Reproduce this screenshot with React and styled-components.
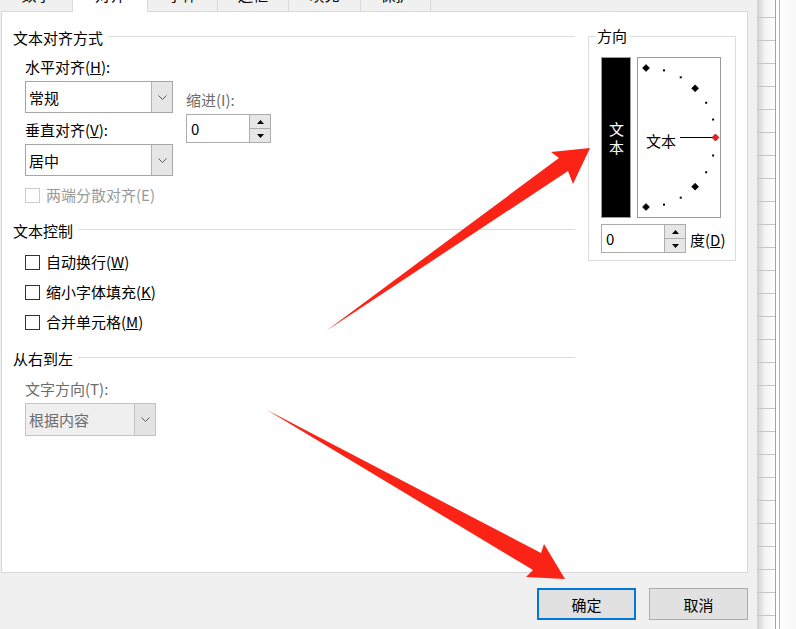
import React from "react"
import styled, { createGlobalStyle } from "styled-components"

const GlobalStyle = createGlobalStyle`
  html, body {
    margin: 0;
    padding: 0;
    background: #fff;
    overflow: hidden;
  }
  body {
    font-family: "Noto Sans CJK SC", "Noto Sans", sans-serif;
    font-size: 15px;
    color: #000;
  }
`

const TABS = [
  { label: "数字", w: 72 },
  { label: "对齐", w: 75, active: true },
  { label: "字体", w: 70 },
  { label: "边框", w: 71 },
  { label: "填充", w: 72 },
  { label: "保护", w: 70 },
]

const Chevron = () => (
  <svg width="9" height="5" viewBox="0 0 9 5">
    <polyline points="0.5,0.5 4.5,4.5 8.5,0.5" fill="none" stroke="#5a5a5a" strokeWidth="1" />
  </svg>
)

const Triangle = ({ up }) => (
  <svg width="7" height="4" viewBox="0 0 7 4">
    <polygon points={up ? "0,4 3.5,0 7,4" : "0,0 3.5,4 7,0"} fill="#000" />
  </svg>
)

const Select = ({ value, width, height, disabled }) => (
  <SelectBox $w={width} $h={height} $disabled={disabled}>
    <SelectValue>{value}</SelectValue>
    <SelectArrow $disabled={disabled}>
      <Chevron />
    </SelectArrow>
  </SelectBox>
)

const Spin = ({ value }) => (
  <SpinBox>
    <SpinValue>{value}</SpinValue>
    <SpinButtons>
      <SpinBtn>
        <Triangle up />
      </SpinBtn>
      <SpinBtn>
        <Triangle />
      </SpinBtn>
    </SpinButtons>
  </SpinBox>
)

const CheckItem = ({ children, disabled, mt }) => (
  <CheckRow $disabled={disabled} $mt={mt}>
    <Check $disabled={disabled} />
    <span>{children}</span>
  </CheckRow>
)

// orientation dial: half circle of marks, centre at the left edge
const Dial = () => {
  const cx = 8
  const cy = 79.5
  const r = 69.5
  const marks = []
  for (let a = -90; a <= 90; a += 15) {
    const rad = (a * Math.PI) / 180
    const x = cx + r * Math.cos(rad)
    const y = cy - r * Math.sin(rad)
    if (a % 45 === 0) {
      const d = 3.5
      marks.push(
        <polygon
          key={a}
          points={`${x},${y - d} ${x + d},${y} ${x},${y + d} ${x - d},${y}`}
          fill={a === 0 ? "#ff1a1a" : "#000"}
          stroke={a === 0 ? "#7a0000" : "#000"}
          strokeWidth="0.6"
        />
      )
    } else {
      marks.push(<rect key={a} x={x - 1} y={y - 1} width="2" height="2" fill="#000" />)
    }
  }
  return (
    <DialBox>
      <svg width="82" height="159" viewBox="0 0 82 159">
        <line x1="42" y1="79.5" x2="75" y2="79.5" stroke="#000" strokeWidth="1" />
        {marks}
      </svg>
      <DialLabel>文本</DialLabel>
    </DialBox>
  )
}

const Arrows = () => (
  <Overlay viewBox="0 0 796 629" width="796" height="629">
    <polygon
      points="326,331 559,158 551,152 590,148 573,184 568,171"
      fill="#fb2216"
    />
    <polygon
      points="267,410 541,553 544,544 565,579 526,577 533,570"
      fill="#fb2216"
    />
  </Overlay>
)

export default function App() {
  return (
    <Screen>
      <GlobalStyle />
      <Dialog>
        <TabBar>
          {TABS.map(t => (
            <Tab key={t.label} $w={t.w} $active={t.active}>
              <span>{t.label}</span>
            </Tab>
          ))}
          <TabFill />
        </TabBar>

        <Panel>
          <LeftCol>
            <SectionHeader>文本对齐方式</SectionHeader>
            <Indent>
              <AlignRow>
                <Column>
                  <Label $mt={9}>
                    水平对齐(<u>H</u>):
                  </Label>
                  <Select value="常规" width={148} />
                  <Label $mt={7}>
                    垂直对齐(<u>V</u>):
                  </Label>
                  <Select value="居中" width={148} />
                </Column>
                <IndentCol>
                  <Label $mt={42} $muted>
                    缩进(I):
                  </Label>
                  <SpinWrap>
                    <Spin value="0" />
                  </SpinWrap>
                </IndentCol>
              </AlignRow>
              <CheckItem disabled mt={9}>
                两端分散对齐(E)
              </CheckItem>
            </Indent>

            <SectionHeader $mt={16}>文本控制</SectionHeader>
            <Indent>
              <CheckItem mt={11}>
                自动换行(<u>W</u>)
              </CheckItem>
              <CheckItem mt={10}>
                缩小字体填充(<u>K</u>)
              </CheckItem>
              <CheckItem mt={10}>
                合并单元格(<u>M</u>)
              </CheckItem>
            </Indent>

            <SectionHeader $mt={17}>从右到左</SectionHeader>
            <Indent>
              <Label $mt={10} $muted>
                文字方向(T):
              </Label>
              <Select value="根据内容" width={131} height={33} disabled />
            </Indent>
          </LeftCol>

          <GroupBox>
            <GroupLegend>方向</GroupLegend>
            <GroupInner>
              <OrientRow>
                <TextBar>
                  <VerticalText>文本</VerticalText>
                </TextBar>
                <Dial />
              </OrientRow>
              <DegreeRow>
                <Spin value="0" />
                <DegreeLabel>
                  度(<u>D</u>)
                </DegreeLabel>
              </DegreeRow>
            </GroupInner>
          </GroupBox>
        </Panel>

        <Footer>
          <Button $primary>确定</Button>
          <Button>取消</Button>
        </Footer>
      </Dialog>

      <Sheet>
        <RowHeader />
        <SheetGap />
        <SheetBody />
      </Sheet>

      <Arrows />
    </Screen>
  )
}

const Screen = styled.div`
  position: relative;
  display: flex;
  width: 796px;
  height: 629px;
  overflow: hidden;
`

const Dialog = styled.div`
  width: 757px;
  height: 629px;
  background: #f0f0f0;
  display: flex;
  flex-direction: column;
`

const TabBar = styled.div`
  display: flex;
  margin-left: 1px;
  width: 747px;
  height: 12px;
`

const Tab = styled.div`
  width: ${p => p.$w}px;
  height: 12px;
  box-sizing: border-box;
  display: flex;
  align-items: flex-end;
  justify-content: center;
  overflow: hidden;
  padding-bottom: 6px;
  line-height: 20px;
  white-space: nowrap;
  background: ${p => (p.$active ? "#fff" : "#f0f0f0")};
  border-right: 1px solid #d9d9d9;
  border-bottom: 1px solid ${p => (p.$active ? "#fff" : "#d9d9d9")};
`

const TabFill = styled.div`
  flex: 1;
  border-bottom: 1px solid #d9d9d9;
`

const Panel = styled.div`
  margin-left: 1px;
  width: 747px;
  height: 561px;
  box-sizing: border-box;
  background: #fff;
  border: 1px solid #d9d9d9;
  border-top: none;
  padding-top: 16px;
  display: grid;
  grid-template-columns: 573px 148px;
  column-gap: 13px;
  align-items: start;
`

const LeftCol = styled.div`
  padding-left: 11px;
  display: flex;
  flex-direction: column;
`

const SectionHeader = styled.div`
  display: flex;
  align-items: flex-start;
  height: 20px;
  line-height: 20px;
  margin-top: ${p => p.$mt || 0}px;
  white-space: nowrap;

  &::after {
    content: "";
    flex: 1;
    height: 1px;
    margin: 8px 0 0 5px;
    background: #dcdcdc;
  }
`

const Indent = styled.div`
  padding-left: 12px;
  display: flex;
  flex-direction: column;
`

const AlignRow = styled.div`
  display: flex;
`

const Column = styled.div`
  display: flex;
  flex-direction: column;
`

const IndentCol = styled.div`
  margin-left: 13px;
  display: flex;
  flex-direction: column;
`

const SpinWrap = styled.div`
  margin-top: 4px;
`

const Label = styled.div`
  height: 20px;
  line-height: 20px;
  margin-top: ${p => p.$mt || 0}px;
  color: ${p => (p.$muted ? "#6d6d6d" : "#000")};
  white-space: nowrap;
`

const SelectBox = styled.div`
  display: flex;
  box-sizing: border-box;
  width: ${p => p.$w}px;
  height: ${p => p.$h || 32}px;
  margin-top: 4px;
  border: 1px solid ${p => (p.$disabled ? "#c4c4c4" : "#a6a6a6")};
  background: ${p => (p.$disabled ? "#efefef" : "#fff")};
  color: ${p => (p.$disabled ? "#6d6d6d" : "#000")};
`

const SelectValue = styled.div`
  flex: 1;
  padding-left: 3px;
  display: flex;
  align-items: center;
`

const SelectArrow = styled.div`
  width: 21px;
  box-sizing: border-box;
  border-left: 1px solid ${p => (p.$disabled ? "#c4c4c4" : "#b4b4b4")};
  background: ${p => (p.$disabled ? "#e3e3e3" : "#e6e6e6")};
  display: flex;
  align-items: center;
  justify-content: center;
`

const SpinBox = styled.div`
  display: flex;
  box-sizing: border-box;
  width: 85px;
  height: 29px;
  border: 1px solid #acacac;
  background: #fff;
`

const SpinValue = styled.div`
  flex: 1;
  padding-left: 4px;
  display: flex;
  align-items: center;
`

const SpinButtons = styled.div`
  width: 20px;
  display: flex;
  flex-direction: column;
  border-left: 1px solid #adadad;
`

const SpinBtn = styled.div`
  flex: 1;
  background: #e6e6e6;
  display: flex;
  align-items: center;
  justify-content: center;

  & + & {
    border-top: 1px solid #adadad;
  }
`

const CheckRow = styled.label`
  display: flex;
  align-items: center;
  gap: 6px;
  height: 20px;
  line-height: 20px;
  margin-top: ${p => p.$mt || 0}px;
  color: ${p => (p.$disabled ? "#9a9a9a" : "#000")};
  white-space: nowrap;
`

const Check = styled.span`
  width: 15px;
  height: 15px;
  box-sizing: border-box;
  border: 1px solid ${p => (p.$disabled ? "#cccccc" : "#333")};
  background: #fff;
`

const GroupBox = styled.fieldset`
  margin: 0;
  padding: 0;
  min-width: 0;
  width: 148px;
  box-sizing: border-box;
  border: 1px solid #dcdcdc;
`

const GroupLegend = styled.legend`
  margin-left: 6px;
  padding: 0 2px;
  line-height: 16px;
`

const GroupInner = styled.div`
  padding: 13px 0 7px 12px;
  display: flex;
  flex-direction: column;
`

const OrientRow = styled.div`
  display: flex;
  gap: 6px;
`

const TextBar = styled.div`
  width: 30px;
  height: 161px;
  box-sizing: border-box;
  border: 1px solid #9a9a9a;
  background: #000;
  color: #fff;
  display: flex;
  align-items: center;
  justify-content: center;
  padding-top: 4px;
`

const VerticalText = styled.span`
  writing-mode: vertical-rl;
  letter-spacing: 3px;
  line-height: 20px;
`

const DialBox = styled.div`
  position: relative;
  width: 84px;
  height: 161px;
  box-sizing: border-box;
  border: 1px solid #9a9a9a;
  background: #fff;

  svg {
    display: block;
  }
`

const DialLabel = styled.span`
  position: absolute;
  left: 8px;
  top: 73px;
  line-height: 20px;
`

const DegreeRow = styled.div`
  display: flex;
  align-items: center;
  margin-top: 6px;
`

const DegreeLabel = styled.span`
  margin-left: 4px;
  padding-top: 2px;
`

const Footer = styled.div`
  display: flex;
  justify-content: flex-end;
  gap: 13px;
  margin-top: 15px;
  padding-right: 9px;
`

const Button = styled.div`
  width: 99px;
  height: 32px;
  box-sizing: border-box;
  background: #e1e1e1;
  border: ${p => (p.$primary ? "2px solid #0078d7" : "1px solid #adadad")};
  display: flex;
  align-items: center;
  justify-content: center;
`

const Sheet = styled.div`
  flex: 1;
  display: flex;
  height: 629px;
`

const RowHeader = styled.div`
  width: 18px;
  border-right: 1px solid #a3a3a3;
  background-image: repeating-linear-gradient(
      to bottom,
      transparent 0,
      transparent 17px,
      #c6c6c6 17px,
      #c6c6c6 18px,
      transparent 18px,
      transparent 23px
    ),
    linear-gradient(to right, #cfcfcf, #f4f4f4 45%, #fff);
`

const SheetGap = styled.div`
  width: 3px;
  background: #fff;
`

const SheetBody = styled.div`
  flex: 1;
  border-left: 1px solid #b4b4b4;
  background: linear-gradient(to right, #fff, #f7f7f7);
`

const Overlay = styled.svg`
  position: absolute;
  top: 0;
  left: 0;
  pointer-events: none;
`
